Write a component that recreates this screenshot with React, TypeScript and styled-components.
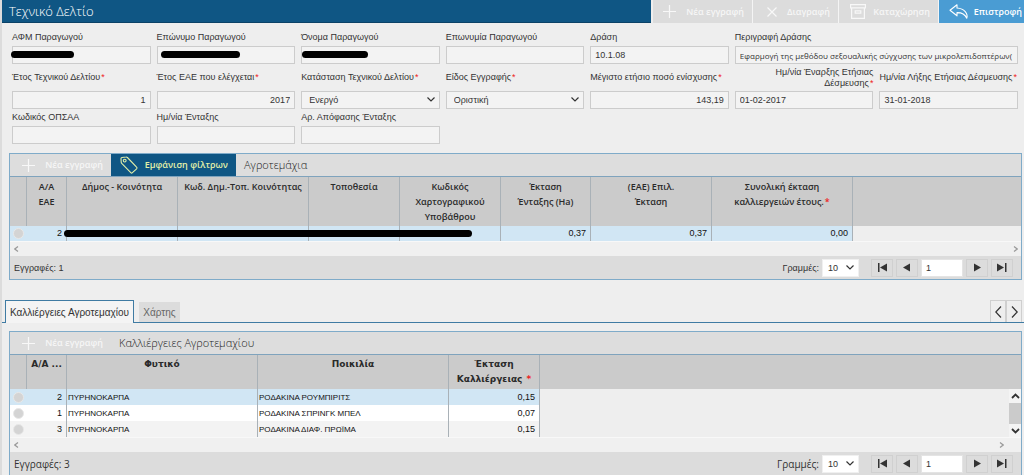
import React from "react";
import styled, { createGlobalStyle } from "styled-components";

const Global = createGlobalStyle`
  * { box-sizing: border-box; }
  body { margin: 0; background: #eeeeee; color: #333; font-family: "Liberation Sans", sans-serif; font-size: 9px; overflow-x: hidden; }
  button, input, select { font: inherit; color: inherit; margin: 0; padding: 0; border-radius: 0; }
`;

const Page = styled.main`
  min-height: 100vh;
  border-left: 2px solid #dcdcdc;
`;
const TitleBar = styled.header`
  display: flex;
  height: 23px;
  background: #eeeeee;
`;
const Title = styled.h1`
  flex: 1;
  margin: 0 2px 0 0;
  padding-left: 7px;
  background: #0f5684;
  border-bottom: 1px solid #0b4267;
  color: #ffffff;
  font: 300 13px/23px "Open Sans", sans-serif;
`;
const Action = styled.button<{ $primary?: boolean; $w: number; $gap: number }>`
  display: flex;
  align-items: center;
  justify-content: flex-end;
  gap: ${(p) => p.$gap}px;
  width: ${(p) => p.$w}px;
  padding-right: ${(p) => (p.$primary ? 2 : 8)}px;
  border: 0;
  border-right: ${(p) => (p.$primary ? 0 : 1)}px solid #f4f4f4;
  background: ${(p) => (p.$primary ? "#4a9cd3" : "#dcdcdc")};
  color: ${(p) => (p.$primary ? "#fff" : "#f6f6f6")};
  font: 600 9px/22px "Open Sans", sans-serif;
  white-space: nowrap;
`;

const Form = styled.form`
  display: grid;
  grid-template-columns: repeat(7, minmax(0, 1fr));
  gap: 2px 6px;
  padding: 8px 6px 9px 10px;
`;
const Field = styled.div<{ $span?: number; $tall?: boolean }>`
  grid-column: span ${(p) => p.$span ?? 1};
  display: grid;
  grid-template-rows: ${(p) => (p.$tall ? 25 : 15)}px 18px;
`;
const Label = styled.label<{ $right?: boolean }>`
  align-self: center;
  margin-bottom: 2px;
  text-align: ${(p) => (p.$right ? "right" : "left")};
  line-height: 11px;
  white-space: ${(p) => (p.$right ? "normal" : "nowrap")};
`;
const Star = styled.span`
  margin-left: 1px;
  color: #ee2222;
`;
const Control = styled.div`
  position: relative;
  display: flex;
`;
const Input = styled.input<{ $right?: boolean; $dense?: boolean }>`
  width: 100%;
  height: 18px;
  padding: 0 4px;
  border: 1px solid #cccccc;
  background: #f3f3f3;
  font: ${(p) => (p.$dense ? `8px "Open Sans"` : `9px "Liberation Sans"`)}, sans-serif;
  text-align: ${(p) => (p.$right ? "right" : "left")};
`;
const Select = styled.select`
  appearance: none;
  width: 100%;
  height: 18px;
  padding: 0 7px;
  border: 1px solid #cccccc;
  background: #f3f3f3;
  font-size: 9px;
`;
const Arrow = styled.svg`
  position: absolute;
  right: 5px;
  top: 6px;
  pointer-events: none;
`;
const Bar = styled.span<{ $x: number; $y: number; $w: number }>`
  position: absolute;
  z-index: 1;
  left: ${(p) => p.$x}px;
  top: ${(p) => p.$y}px;
  width: ${(p) => p.$w}px;
  height: 7px;
  border-radius: 4px;
  background: #000;
`;

const Panel = styled.section<{ $open?: boolean }>`
  margin: 0 2px 0 7px;
  border: 1px solid #7fabc9;
  border-bottom-width: ${(p) => (p.$open ? 0 : 1)}px;
`;
const Toolbar = styled.div`
  display: flex;
  height: 23px;
  background: #dddddd;
  border-bottom: 1px solid #7fa3bd;
`;
const ToolButton = styled.button<{ $active?: boolean; $w: number }>`
  display: flex;
  align-items: center;
  justify-content: flex-end;
  gap: ${(p) => (p.$active ? 7 : 10)}px;
  width: ${(p) => p.$w}px;
  padding-right: 8px;
  border: 0;
  background: ${(p) => (p.$active ? "#0f5684" : "#dddddd")};
  color: ${(p) => (p.$active ? "#e3f0a8" : "#f6f6f6")};
  font: 600 9px/22px "Open Sans", sans-serif;
  white-space: nowrap;
`;
const PanelTitle = styled.h2`
  margin: 0;
  padding-left: 8px;
  color: #222;
  font: 300 11px/22px "Open Sans", sans-serif;
`;
const Table = styled.table`
  width: 100%;
  table-layout: fixed;
  border-collapse: separate;
  border-spacing: 0;
`;
const Th = styled.th<{ $wide?: boolean }>`
  height: ${(p) => (p.$wide ? 34 : 49)}px;
  padding: 2px 3px 0;
  vertical-align: top;
  background: #cbcbcb;
  border-right: 1px solid #a9b1b7;
  color: #2a2a2a;
  font: ${(p) => (p.$wide ? `bold 9px/15px "DejaVu Sans"` : `600 9px/15px "Open Sans"`)}, sans-serif;
  white-space: pre-line;
  &:last-child { border-right: 0; }
`;
const Tr = styled.tr<{ $bg: string }>`
  background: ${(p) => p.$bg};
`;
const Td = styled.td<{ $right?: boolean; $short?: boolean }>`
  position: relative;
  height: ${(p) => (p.$short ? 15 : 16)}px;
  padding: 0 ${(p) => (p.$right ? 4 : 1)}px;
  border-right: 1px solid #a9b1b7;
  color: #111;
  font-size: ${(p) => (p.$right ? 9 : 8)}px;
  line-height: 15px;
  text-align: ${(p) => (p.$right ? "right" : "left")};
  white-space: nowrap;
`;
const DotCell = styled(Td)`
  border-right-color: transparent;
`;
const Dot = styled.span`
  display: block;
  width: 11px;
  height: 11px;
  margin: 0 auto;
  border: 1px solid #e8e8e8;
  border-radius: 50%;
  background: #d4d4d4;
`;
const Rest = styled.td`
  padding: 0;
  background: #eeeeee;
`;
const VScroll = styled.div`
  display: flex;
  flex-direction: column;
  align-items: center;
  justify-content: space-between;
  width: 12px;
  height: 48px;
  margin-left: auto;
  padding: 4px 0 3px;
  background: #f4f4f4;
`;
const Thumb = styled.span`
  width: 12px;
  height: 21px;
  background: #cbcbcb;
`;
const HScroll = styled.div<{ $inset?: boolean }>`
  display: flex;
  align-items: center;
  justify-content: space-between;
  height: 15px;
  padding: 0 ${(p) => (p.$inset ? 17 : 3)}px 0 4px;
  background: #f0f0f0;
  border-top: 1px solid #f8f8f8;
`;
const Footer = styled.footer<{ $loose?: boolean }>`
  display: flex;
  align-items: center;
  height: 23px;
  padding: 0 8px 0 4px;
  background: #dcdcdc;
  font: ${(p) => (p.$loose ? `10px/22px "Open Sans"` : `9px/22px "Liberation Sans"`)}, sans-serif;
`;
const Count = styled.span`
  flex: 1;
`;
const PageSize = styled.div`
  position: relative;
  width: 37px;
  margin: 0 12px 0 3px;
`;
const SizeSelect = styled(Select)`
  display: block;
  border-color: #f0f0f0;
  padding: 0 5px;
  background: #fff;
  font: 9px/16px "Liberation Sans", sans-serif;
`;
const Pager = styled.div`
  display: flex;
  gap: 3px;
`;
const PagerButton = styled.button`
  display: grid;
  place-items: center;
  width: 22px;
  height: 18px;
  border: 1px solid #d0d0d0;
  background: #dcdcdc;
`;
const PageInput = styled.input`
  width: 42px;
  height: 18px;
  padding: 0 4px;
  border: 1px solid #e4e4e4;
  background: #fff;
  font-family: "Liberation Sans", sans-serif;
  font-size: 9px;
`;

const Tabs = styled.nav`
  display: flex;
  align-items: flex-end;
  height: 23px;
  margin: 20px 0 8px;
  padding: 0 2px 0 3px;
  border-bottom: 1px solid #3f7ba3;
`;
const Tab = styled.button<{ $active?: boolean }>`
  width: ${(p) => (p.$active ? 129 : 41)}px;
  height: ${(p) => (p.$active ? 23 : 20)}px;
  margin: 0 5px ${(p) => (p.$active ? -1 : 0)}px 0;
  border: ${(p) => (p.$active ? "1px solid #3f7ba3" : "0")};
  border-bottom: 0;
  background: ${(p) => (p.$active ? "#f4f4f4" : "#dcdcdc")};
  color: ${(p) => (p.$active ? "#333" : "#666")};
  font: 10px "Liberation Sans", sans-serif;
  white-space: nowrap;
`;
const TabArrows = styled.div`
  display: flex;
  margin-left: auto;
`;
const TabArrow = styled.button`
  display: grid;
  place-items: center;
  width: 16px;
  height: 22px;
  border: 1px solid #cfcfcf;
  border-bottom: 0;
  background: #eeeeee;
`;

const Chevron = ({ d, w = 9, h = 5, c = "#333", s = 1.2 }: { d: string; w?: number; h?: number; c?: string; s?: number }) => (
  <svg width={w} height={h} viewBox={`0 0 ${w} ${h}`} fill="none" stroke={c} strokeWidth={s}><path d={d} /></svg>
);
const Plus = () => (
  <svg width="13" height="13" viewBox="0 0 13 13" stroke="#f8f8f8" strokeWidth="1.2"><path d="M6.5 0v13M0 6.5h13" /></svg>
);
const Cross = () => (
  <svg width="10" height="10" viewBox="0 0 10 10" stroke="#f8f8f8" strokeWidth="1.2"><path d="M0.5 0.5l9 9M9.5 0.5l-9 9" /></svg>
);
const Archive = () => (
  <svg width="16" height="15" viewBox="0 0 16 15" fill="none" stroke="#f8f8f8" strokeWidth="1.2"><path d="M.6.6h14.8v3.2H.6zM1.6 3.8v10.6h12.8V3.8M5.2 6.8h5.6v2.4H5.2z" /></svg>
);
const Back = () => (
  <svg width="20" height="15" viewBox="0 0 20 15" fill="none" stroke="#fff" strokeWidth="1.1" strokeLinejoin="round"><path d="M8 .8L1 6.200l7 5.600V8.600c4.300-.1 7.800 1.400 9.800 5.600C19.200 9.500 15.500 4.600 8 4z" /></svg>
);
const Tag = () => (
  <svg width="18" height="18" viewBox="0 0 18 18" fill="none" stroke="#e3f0a8" strokeWidth="1.1" strokeLinejoin="round"><path d="M1 2.600c0-.7.300-1 1-1.100l4-.5c.6-.1 1 .1 1.400.5l9.200 9.700c.5.500.5 1.100 0 1.600l-4.200 3.900c-.5.500-1.100.5-1.600 0L1.700 7.300c-.4-.4-.5-.8-.5-1.300z" /><circle cx="4.700" cy="4.600" r="1.400" /></svg>
);

type FieldDef = {
  id: string; label: string; value?: string; req?: boolean; gap?: boolean; right?: boolean;
  select?: boolean; span?: number; wrap?: boolean; dense?: boolean; bar?: [number, number, number];
};

const rows: FieldDef[][] = [
  [
    { id: "afm", label: "ΑΦΜ Παραγωγού", bar: [-1, 5, 63] },
    { id: "surname", label: "Επώνυμο Παραγωγού", bar: [4, 5, 79] },
    { id: "name", label: "Όνομα Παραγωγού", bar: [1, 5, 66] },
    { id: "company", label: "Επωνυμία Παραγωγού" },
    { id: "action", label: "Δράση", value: "10.1.08" },
    { id: "desc", label: "Περιγραφή Δράσης", value: "Εφαρμογή της μεθόδου σεξουαλικής σύγχυσης των μικρολεπιδοπτέρων(", span: 2, dense: true },
  ],
  [
    { id: "year", label: "Έτος Τεχνικού Δελτίου", req: true, value: "1", right: true },
    { id: "eae", label: "Έτος ΕΑΕ που ελέγχεται", req: true, value: "2017", right: true },
    { id: "status", label: "Κατάσταση Τεχνικού Δελτίου", req: true, value: "Ενεργό", select: true },
    { id: "kind", label: "Είδος Εγγραφής", req: true, value: "Οριστική", select: true },
    { id: "max", label: "Μέγιστο ετήσιο ποσό ενίσχυσης", req: true, value: "143,19", right: true },
    { id: "from", label: "Ημ/νία Έναρξης Ετήσιας Δέσμευσης", req: true, value: "01-02-2017", wrap: true },
    { id: "to", label: "Ημ/νία Λήξης Ετήσιας Δέσμευσης", req: true, value: "31-01-2018" },
  ],
  [
    { id: "ops", label: "Κωδικός ΟΠΣΑΑ" },
    { id: "date", label: "Ημ/νία Ένταξης" },
    { id: "dec", label: "Αρ. Απόφασης Ένταξης" },
  ],
];

function FormField({ f, tall }: { f: FieldDef; tall: boolean }) {
  return (
    <Field $span={f.span} $tall={tall}>
      <Label htmlFor={f.id} $right={f.wrap}>{f.label}{f.req && <Star>*</Star>}</Label>
      <Control>
        {f.select ? (
          <>
            <Select id={f.id}><option>{f.value}</option></Select>
            <Arrow width="8" height="5" viewBox="0 0 8 5" fill="none" stroke="#333" strokeWidth="1.2"><path d="M.5.5L4 4 7.500.5" /></Arrow>
          </>
        ) : (
          <Input id={f.id} defaultValue={f.value} $right={f.right} $dense={f.dense} />
        )}
        {f.bar && <Bar $x={f.bar[0]} $y={f.bar[1]} $w={f.bar[2]} />}
      </Control>
    </Field>
  );
}

function TableFooter({ id, count, loose }: { id: string; count: number; loose?: boolean }) {
  return (
    <Footer $loose={loose}>
      <Count>Εγγραφές: {count}</Count>
      <label htmlFor={`${id}-size`}>Γραμμές:</label>
      <PageSize>
        <SizeSelect id={`${id}-size`}><option>10</option></SizeSelect>
        <Arrow width="8" height="5" viewBox="0 0 8 5" fill="none" stroke="#333" strokeWidth="1.2"><path d="M.5.5L4 4 7.500.5" /></Arrow>
      </PageSize>
      <Pager>
        <PagerButton aria-label="Πρώτη"><svg width="10" height="9" fill="#333"><path d="M1 0h1.500v9H1zM10 .5v8l-7-4z" /></svg></PagerButton>
        <PagerButton aria-label="Προηγούμενη"><svg width="8" height="9" fill="#333"><path d="M7 .5v8l-7-4z" /></svg></PagerButton>
        <PageInput aria-label="Σελίδα" defaultValue="1" />
        <PagerButton aria-label="Επόμενη"><svg width="8" height="9" fill="#333"><path d="M1 .5v8l7-4z" /></svg></PagerButton>
        <PagerButton aria-label="Τελευταία"><svg width="10" height="9" fill="#333"><path d="M8 0h1.500v9H8zM0 .5v8l7-4z" /></svg></PagerButton>
      </Pager>
    </Footer>
  );
}

const Cols = ({ widths }: { widths: number[] }) => (
  <colgroup>{widths.map((w, i) => <col key={i} style={{ width: w }} />)}<col /></colgroup>
);

const crops = [
  ["2", "ΡΟΔΑΚΙΝΑ ΡΟΥΜΠΙΡΙΤΣ", "0,15", "#d1e6f4"],
  ["1", "ΡΟΔΑΚΙΝΑ ΣΠΡΙΝΓΚ ΜΠΕΛ", "0,07", "#ffffff"],
  ["3", "ΡΟΔΑΚΙΝΑ ΔΙΑΦ. ΠΡΩΪΜΑ", "0,15", "#f3f3f3"],
];

export default function App() {
  return (
    <Page>
      <Global />
      <TitleBar>
        <Title>Τεχνικό Δελτίο</Title>
        <Action $w={100} $gap={10}><Plus />Νέα εγγραφή</Action>
        <Action $w={86} $gap={10}><Cross />Διαγραφή</Action>
        <Action $w={100} $gap={7}><Archive />Καταχώρηση</Action>
        <Action $w={85} $gap={5} $primary><Back />Επιστροφή</Action>
      </TitleBar>
      <Form>
        {rows.map((row, r) => (
          <React.Fragment key={r}>
            {row.map((f) => <FormField key={f.id} f={f} tall={r === 1} />)}
          </React.Fragment>
        ))}
      </Form>
      <Panel>
        <Toolbar>
          <ToolButton $w={101}><Plus />Νέα εγγραφή</ToolButton>
          <ToolButton $w={125} $active><Tag />Εμφάνιση φίλτρων</ToolButton>
          <PanelTitle>Αγροτεμάχια</PanelTitle>
        </Toolbar>
        <Table>
          <Cols widths={[17, 40, 111, 131, 91, 101, 90, 121, 141]} />
          <thead>
            <tr>
              <Th />
              <Th>{"Α/Α\nΕΑΕ"}</Th>
              <Th>Δήμος - Κοινότητα</Th>
              <Th>Κωδ. Δημ.-Τοπ. Κοινότητας</Th>
              <Th>Τοποθεσία</Th>
              <Th>{"Κωδικός\nΧαρτογραφικού\nΥποβάθρου"}</Th>
              <Th>{"Έκταση\nΈνταξης (Ha)"}</Th>
              <Th>{"(ΕΑΕ) Επιλ.\nΈκταση"}</Th>
              <Th>{"Συνολική έκταση\nκαλλιεργειών έτους."}<Star>*</Star></Th>
              <Th />
            </tr>
          </thead>
          <tbody>
            <Tr $bg="#d1e6f4">
              <DotCell $short><Dot /></DotCell>
              <Td $right $short>2<Bar $x={37} $y={4} $w={408} /></Td>
              <Td $short /><Td $short /><Td $short /><Td $short />
              <Td $right $short>0,37</Td>
              <Td $right $short>0,37</Td>
              <Td $right $short>0,00</Td>
              <Rest />
            </Tr>
          </tbody>
        </Table>
        <HScroll>
          <Chevron d="M4 .5L.8 3 4 5.500" w={5} h={6} c="#999" />
          <Chevron d="M1 .5L4.200 3 1 5.500" w={5} h={6} c="#999" />
        </HScroll>
        <TableFooter id="parcels" count={1} />
      </Panel>
      <Tabs>
        <Tab $active>Καλλιέργειες Αγροτεμαχίου</Tab>
        <Tab>Χάρτης</Tab>
        <TabArrows>
          <TabArrow aria-label="Προηγούμενη καρτέλα"><Chevron d="M6 .5L.8 6 6 11.500" w={7} h={12} /></TabArrow>
          <TabArrow aria-label="Επόμενη καρτέλα"><Chevron d="M1 .5L6.200 6 1 11.500" w={7} h={12} /></TabArrow>
        </TabArrows>
      </Tabs>
      <Panel $open>
        <Toolbar>
          <ToolButton $w={101}><Plus />Νέα εγγραφή</ToolButton>
          <PanelTitle>Καλλιέργειες Αγροτεμαχίου</PanelTitle>
        </Toolbar>
        <Table>
          <Cols widths={[17, 40, 191, 191, 91]} />
          <thead>
            <tr>
              <Th $wide />
              <Th $wide>Α/Α ...</Th>
              <Th $wide>Φυτικό</Th>
              <Th $wide>Ποικιλία</Th>
              <Th $wide>{"Έκταση\nΚαλλιέργειας "}<Star>*</Star></Th>
              <Th $wide />
            </tr>
          </thead>
          <tbody>
            {crops.map(([n, variety, area, bg], i) => (
              <Tr key={n} $bg={bg}>
                <DotCell><Dot /></DotCell>
                <Td $right>{n}</Td>
                <Td>ΠΥΡΗΝΟΚΑΡΠΑ</Td>
                <Td>{variety}</Td>
                <Td $right>{area}</Td>
                {i === 0 && (
                  <Rest rowSpan={3}>
                    <VScroll>
                      <Chevron d="M1 5l3.500-3.500L8 5" h={6} s={1.8} />
                      <Thumb />
                      <Chevron d="M1 1l3.500 3.500L8 1" h={6} s={1.8} />
                    </VScroll>
                  </Rest>
                )}
              </Tr>
            ))}
          </tbody>
        </Table>
        <HScroll $inset>
          <Chevron d="M4 .5L.8 3 4 5.500" w={5} h={6} c="#999" />
          <Chevron d="M1 .5L4.200 3 1 5.500" w={5} h={6} c="#999" />
        </HScroll>
        <TableFooter id="crops" count={3} loose />
      </Panel>
    </Page>
  );
}
